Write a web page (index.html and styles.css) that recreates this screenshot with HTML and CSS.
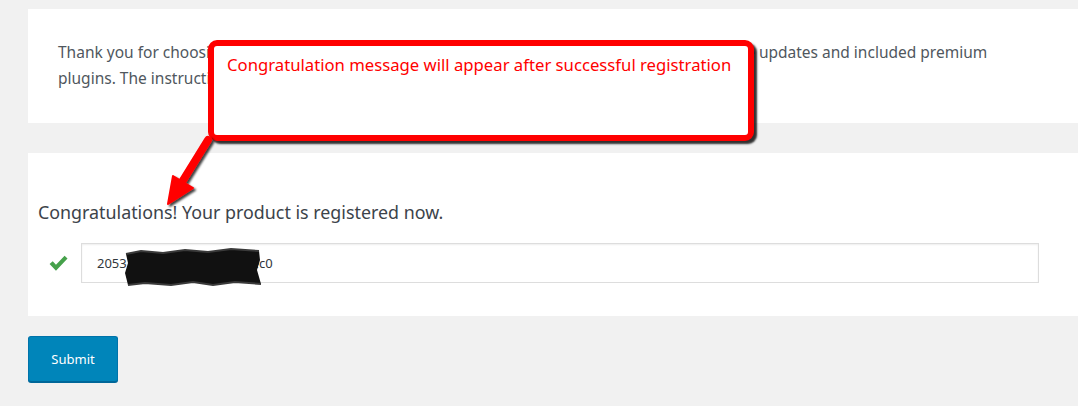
FILE: index.html
```html
<!DOCTYPE html>
<html>
<head>
<meta charset="utf-8">
<link rel="stylesheet" href="styles.css">
</head>
<body>
<div class="page">
  <div class="card intro">
    <p class="intro-text">Thank you for choosing Avada! Your product must be registered to receive Avada demos, theme updates and included premium plugins. The instructions below in toggle format must be followed exactly.</p>
  </div>
  <div class="card reg">
    <h2 class="reg-title">Congratulations! Your product is registered now.</h2>
    <div class="key-row">
      <svg class="check" viewBox="0 0 20 18" width="21" height="19"><path d="M1.5 9.5 L4.5 6.8 L7.6 10.2 L15.8 1.6 L18.6 4.3 L7.6 15.8 Z" fill="#46a14b"/></svg>
      <div class="key-field">
        <span class="key-text">2053<span class="hidden-mid">xxxxxxxxxxxxxxxxxxxxxx</span>ec0</span>
        <svg class="redact" viewBox="0 0 140 38" width="140" height="38"><path d="M3 6 L18 3 L40 5 L62 2 L85 4 L108 1 L136 3 L137 12 L134 22 L138 36 L112 34 L90 37 L70 34 L48 37 L22 35 L5 37 L2 25 L5 15 Z" fill="#111"/><path d="M3 6 L18 3 L40 5 L62 2 L85 4 L108 1 L136 3" stroke="#3a3a3a" stroke-width="2" fill="none"/><path d="M5 37 L22 35 L48 37 L70 34 L90 37 L112 34 L138 36" stroke="#3a3a3a" stroke-width="2" fill="none"/></svg>
      </div>
    </div>
  </div>
  <button class="submit" type="button">Submit</button>

  <div class="callout">Congratulation message will appear after successful registration</div>
  <svg class="arrow" width="80" height="90" viewBox="0 0 80 90">
    <defs><filter id="sh" x="-20%" y="-20%" width="150%" height="150%"><feDropShadow dx="2" dy="2" stdDeviation="1" flood-color="#000" flood-opacity="0.75"/></filter></defs>
    <g filter="url(#sh)">
      <path d="M46 6 L20 48" stroke="#f00" stroke-width="8" stroke-linecap="round" fill="none"/>
      <path d="M6 70 L11 42 L31 54 Z" fill="#f00" stroke="#f00" stroke-width="2" stroke-linejoin="round"/>
    </g>
  </svg>
</div>
</body>
</html>
```
FILE: styles.css
```css
html, body {
  margin: 0;
  padding: 0;
  background: #f1f1f1;
  font-family: "Open Sans", "Noto Sans", sans-serif;
}
.page {
  position: relative;
  padding: 9px 0 20px 28px;
  display: flex;
  flex-direction: column;
  align-items: flex-start;
}
.card {
  background: #fff;
  align-self: stretch;
}
.intro {
  height: 114px;
  box-sizing: border-box;
  padding: 30px 30px 0 30px;
}
.intro-text {
  margin: 0;
  font-family: "Noto Sans", sans-serif;
  font-size: 15.5px;
  line-height: 26px;
  color: #50575e;
  max-width: 955px;
}
.reg {
  margin-top: 30px;
  height: 163px;
  box-sizing: border-box;
  padding: 47px 10px 0 10px;
}
.reg-title {
  margin: 0;
  font-family: "Noto Sans", sans-serif;
  font-weight: 400;
  font-size: 17.85px;
  line-height: 24px;
  color: #3c434a;
}
.key-row {
  margin-top: 19px;
  display: flex;
  align-items: center;
  gap: 12px;
  padding-left: 10px;
}
.check {
  display: block;
  flex: none;
}
.key-field {
  position: relative;
  width: 958px;
  height: 40px;
  box-sizing: border-box;
  border: 1px solid #ddd;
  box-shadow: inset 0 1px 2px rgba(0,0,0,0.07);
  display: flex;
  align-items: center;
  padding-left: 15px;
}
.key-text {
  font-family: "Noto Sans", sans-serif;
  font-size: 13px;
  color: #32373c;
}
.hidden-mid {
  color: transparent;
  letter-spacing: -1.2px;
}
.redact {
  position: absolute;
  left: 41px;
  top: 4px;
}
.submit {
  margin-top: 20px;
  width: 90px;
  height: 46px;
  background: #0085ba;
  border: 1px solid #0073aa;
  border-bottom-color: #006799;
  border-radius: 3px;
  box-shadow: 0 1px 0 #006799;
  color: #fff;
  font-family: "Noto Sans", sans-serif;
  font-size: 13px;
  padding: 0;
}
.callout {
  position: absolute;
  left: 208px;
  top: 40px;
  width: 546px;
  height: 101px;
  box-sizing: border-box;
  border: 6px solid #f00;
  border-radius: 9px;
  background: #fff;
  box-shadow: 3px 3px 2px rgba(0,0,0,0.8);
  padding: 7px 0 0 13px;
  color: #f00;
  font-family: "Noto Sans", sans-serif;
  font-size: 16.7px;
  line-height: 24px;
}
.arrow {
  position: absolute;
  left: 162px;
  top: 134px;
}
```
